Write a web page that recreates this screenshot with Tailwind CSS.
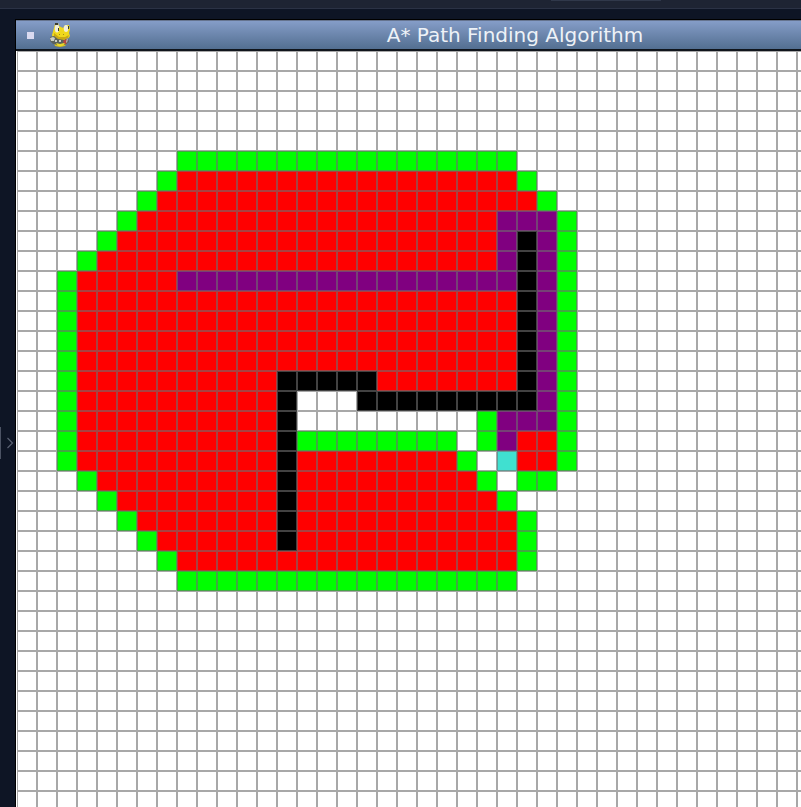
<!DOCTYPE html>
<html lang="en">
<head>
<meta charset="utf-8">
<title>A* Path Finding Algorithm</title>
<script src="https://cdn.jsdelivr.net/npm/@tailwindcss/browser@4"></script>
</head>
<body class="flex h-screen flex-col overflow-hidden bg-[#0e1525] font-['DejaVu_Sans',sans-serif]">
<header class="flex h-[9px] shrink-0 justify-center border-b border-[#2b3245] bg-[#1e2433]">
  <div class="ml-[410px] h-px w-[110px] bg-[#30384a]"></div>
</header>
<div class="flex min-h-0 flex-1">
  <aside class="flex w-[15px] shrink-0 items-center pt-[70px]">
    <button aria-label="Expand panel" class="flex h-8 w-full items-center border-l border-[#4b5263] pl-[5px]">
      <svg class="h-3 w-2" viewBox="0 0 8 12" fill="none" stroke="#596071" stroke-width="1.2"><path d="M1.500 1 6.500 6l-5 5"/></svg>
    </button>
  </aside>
  <main class="min-w-0 flex-1 overflow-hidden pt-[10px]">
    <section class="flex h-full min-w-[1001px] flex-col border-t border-l border-black bg-white">
      <div class="flex h-[31px] shrink-0 items-center border-t border-b-2 border-t-[#66748f] border-b-[#10151c] bg-linear-to-b from-[#859dc8] to-[#536f91]">
        <button aria-label="Window menu" class="ml-[11px] size-[7px] bg-[#dadaf0]"></button>
        <svg class="ml-4 h-6 w-5" viewBox="0 0 20 24">
          <path d="M4 20l1 3 5 1 5-1 2-3z" fill="#d9c21a"/>
          <path d="M4 5 5 1l3-1 1 3 4 2 2-3 4 0 1 4-1 4 1 3-3 4-7 2-7-3-1-4z" fill="#efd81d"/>
          <path d="M4 10l5 4h6l4-2-1 3-5 2-5 0-4-3z" fill="#c9a915"/>
          <path d="M0 14l4-1 4 3 6 1 4-2 1 4-4 3-6 0-6-1-3-3z" fill="#5a635e"/>
          <path d="M0 15l3-1 2 1-1 3-3 0zM5 17l2 0 0 2-2 0zM9 17h2v2H9z" fill="#c9cdc4"/>
          <path d="M13 18l3-2 2 1-2 4-2 0z" fill="#b5483f"/>
          <path d="M17 15l1 1-1 4-1-1z" fill="#aebac5"/>
          <path d="M6 20l4 1 4-1 1 1-3 2H8z" fill="#ead82b"/>
          <ellipse cx="7" cy="5.500" rx="2.200" ry="4" fill="#f0eedb"/>
          <ellipse cx="16" cy="5.500" rx="2.200" ry="3.500" fill="#f0eedb"/>
          <path d="M5 0h3v2H5zM18 3h1v3h-1zM8 5h1v3H8z" fill="#3b3c2c"/>
          <path d="M9 11h1v1H9zM13 11h1v1h-1z" fill="#a18c1a"/>
        </svg>
        <h1 class="flex-1 pr-14 text-center text-[20px] leading-7 text-[#eef2f7]">A* Path Finding Algorithm</h1>
      </div>
      <div class="min-h-0 flex-1 pl-px">
        <svg class="size-full overflow-visible" role="img" aria-label="Path search grid">
          <defs>
            <pattern id="grid" width="20" height="20" patternUnits="userSpaceOnUse">
              <path d="M0 0h20v1H1v18h19v1H0zM19 1h1v18h-1z" fill="#6e6e6e" fill-opacity=".6"/>
            </pattern>
          </defs>
          <!-- Unit squares are grid cells: closed, open, barrier, path, end -->
          <g transform="scale(20)" shape-rendering="crispEdges">
            <path fill="#f00" d="M8 6h17v1h1v1h-2v3h1v6H14v3h8v1h1v1h1v1h1v3H8v-1H7v-1H6v-1H5v-1H4v-1H3V11h1v-1h1V9h1V8h1V7h1zM25 19h2v2h-2z"/>
            <path fill="#0f0" d="M8 5h17v1H8zM7 6h1v1H7zM6 7h1v1H6zM5 8h1v1H5zM4 9h1v1H4zM3 10h1v1H3zM2 11h1v10H2zM3 21h1v1H3zM4 22h1v1H4zM5 23h1v1H5zM6 24h1v1H6zM7 25h1v1H7zM8 26h17v1H8zM25 23h1v3h-1zM24 22h1v1h-1zM23 21h1v1h-1zM22 20h1v1h-1zM14 19h8v1h-8zM23 18h1v2h-1zM25 21h2v1h-2zM27 8h1v13h-1zM26 7h1v1h-1zM25 6h1v1h-1z"/>
            <path fill="#000" d="M13 16h5v1h7V9h1v9h-9v-1h-3v8h-1z"/>
            <path fill="#800080" d="M24 8h3v11h-2v1h-1v-2h2V9h-1v3H8v-1h16z"/>
            <path fill="#40e0d0" d="M24 20h1v1h-1z"/>
          </g>
          <rect width="100%" height="100%" fill="url(#grid)"/>
        </svg>
      </div>
    </section>
  </main>
</div>
</body>
</html>
